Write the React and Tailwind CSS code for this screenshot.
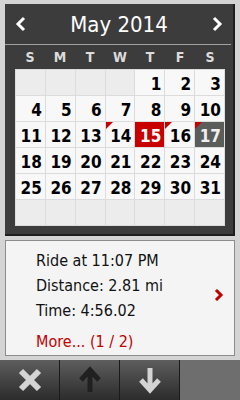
import React from 'react';

const font = { fontFamily: '"DejaVu Sans Condensed", "DejaVu Sans", sans-serif' };

// 42 cells, May 2014 starts on Thursday
const cells = [
  null, null, null, null, 1, 2, 3,
  4, 5, 6, 7, 8, 9, 10,
  11, 12, 13, 14, 15, 16, 17,
  18, 19, 20, 21, 22, 23, 24,
  25, 26, 27, 28, 29, 30, 31,
  null, null, null, null, null, null, null,
];

const marked = [14, 16, 17];

function DayCell({ day }) {
  if (day === null) {
    return <div className="h-[26px] bg-[#ececec] border-r border-b border-[#dcdcdc]" />;
  }
  const today = day === 15;
  const selected = day === 17;
  return (
    <div
      className={`relative h-[26px] border-r border-b border-[#dcdcdc] flex items-center justify-end pr-[3px] text-[17px] font-bold leading-none ${
        today ? 'bg-[#c80000] text-white' : selected ? 'bg-[#5a5d5a] text-[#f0f0f0]' : 'bg-[#f8f8f8] text-black'
      }`}
    >
      {marked.includes(day) && (
        <span className="absolute left-0 top-0 w-0 h-0 border-t-[7px] border-r-[7px] border-t-[#c80000] border-r-transparent" />
      )}
      <span className="pt-[3px]">{day}</span>
    </div>
  );
}

export default function App() {
  return (
    <div className="w-[240px] h-[400px] bg-[#d4d4d4] flex flex-col overflow-hidden" style={font}>
      {/* Calendar panel */}
      <div className="mt-[4px] ml-[5px] w-[230px] h-[232px] bg-[#3c3c3c] border-r-2 border-b-2 border-[#1e1e1e] flex flex-col">
        <div className="h-[40px] flex items-center justify-between px-[6px] text-white">
          <svg width="14" height="16" viewBox="0 0 14 16" className="ml-[3px]">
            <path d="M10 2 L4 8 L10 14" fill="none" stroke="#fff" strokeWidth="3" />
          </svg>
          <span className="text-[22px] leading-none pt-[2px]">May 2014</span>
          <svg width="14" height="16" viewBox="0 0 14 16" className="mr-[3px]">
            <path d="M4 2 L10 8 L4 14" fill="none" stroke="#fff" strokeWidth="3" />
          </svg>
        </div>
        <div className="h-px bg-[#a0a0a0] mr-[2px]" />
        <div className="pl-[10px] pr-[9px] flex flex-col">
          <div className="grid grid-cols-7 w-[210px] h-[24px] items-center text-center text-[#dcdcdc] text-[14px] font-bold">
            {['S', 'M', 'T', 'W', 'T', 'F', 'S'].map((d, i) => (
              <span key={i}>{d}</span>
            ))}
          </div>
          <div className="grid grid-cols-7 w-[210px] border-l border-t border-[#dcdcdc]">
            {cells.map((d, i) => (
              <DayCell key={i} day={d} />
            ))}
          </div>
        </div>
      </div>

      {/* Activity info */}
      <div className="mt-[4px] ml-[5px] w-[230px] h-[116px] bg-[#f4f4f4] border border-[#8c8c8c] flex items-center">
        <div className="flex-1 pl-[30px] pt-[6px] text-[#111] text-[16px] leading-[25px]">
          <div>Ride at 11:07 PM</div>
          <div>Distance: 2.81 mi</div>
          <div>Time: 4:56.02</div>
          <div className="text-[#c00000] mt-[6px]">More... (1 / 2)</div>
        </div>
        <svg width="10" height="12" viewBox="0 0 10 12" className="mr-[10px] mb-[6px]">
          <path d="M2 1 L7 6 L2 11" fill="none" stroke="#c00000" strokeWidth="3" />
        </svg>
      </div>

      {/* Bottom buttons */}
      <div className="mt-auto h-[40px] flex">
        <button className="w-[60px] h-full bg-gradient-to-b from-[#5e5e5e] to-[#2c2c2c] border-r border-[#1a1a1a] flex items-center justify-center">
          <svg width="26" height="26" viewBox="0 0 26 26">
            <path d="M4 4 L22 22 M22 4 L4 22" stroke="#d4d4d4" strokeWidth="6" />
          </svg>
        </button>
        <button className="w-[60px] h-full bg-gradient-to-b from-[#5e5e5e] to-[#2c2c2c] border-r border-[#1a1a1a] flex items-center justify-center">
          <svg width="24" height="28" viewBox="0 0 24 28">
            <path d="M12 26 V6 M3 14 L12 4 L21 14" fill="none" stroke="#202020" strokeWidth="5" />
          </svg>
        </button>
        <button className="w-[60px] h-full bg-gradient-to-b from-[#5e5e5e] to-[#2c2c2c] border-r border-[#1a1a1a] flex items-center justify-center">
          <svg width="24" height="28" viewBox="0 0 24 28">
            <path d="M12 2 V22 M3 14 L12 24 L21 14" fill="none" stroke="#d4d4d4" strokeWidth="5" />
          </svg>
        </button>
        <div className="flex-1 h-full bg-[#6e6e6e]" />
      </div>
    </div>
  );
}
